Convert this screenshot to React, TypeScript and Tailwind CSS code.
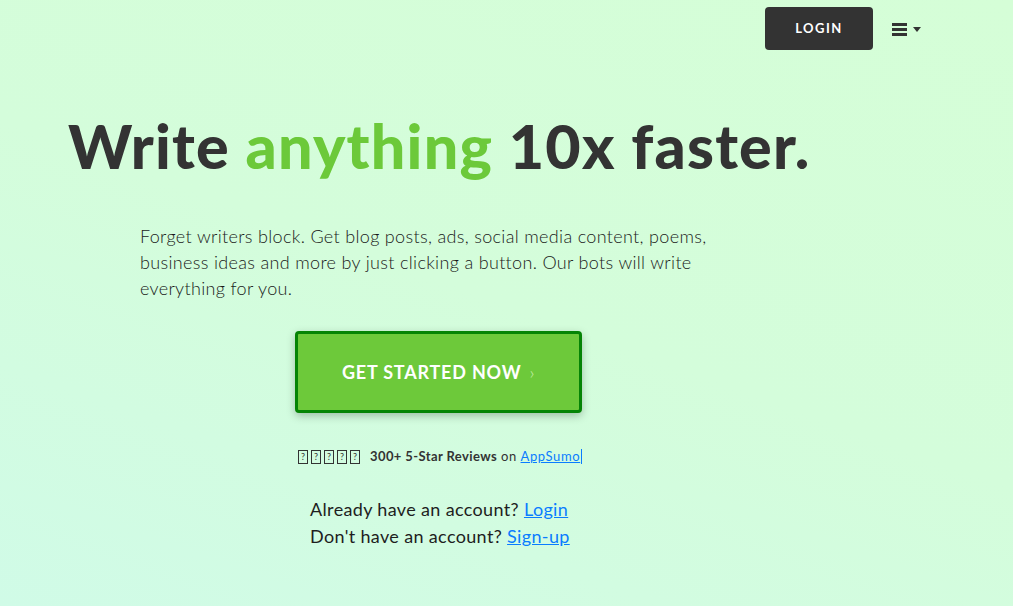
import React from "react";

const font = { fontFamily: "Lato, 'Noto Sans', sans-serif" };

function Tofu() {
  return (
    <span className="inline-flex h-[14px] w-[10px] items-center justify-center border border-[#333] text-[9px] leading-none text-[#333] mr-[3px]">
      ?
    </span>
  );
}

export default function App() {
  return (
    <div
      className="relative h-[606px] w-full overflow-hidden bg-[linear-gradient(200deg,#d5fed7_0%,#d4fddb_50%,#d0fbe7_100%)] text-[#333]"
      style={font}
    >
      <header className="flex h-[58px] items-start justify-end pr-[92px] pt-[7px]">
        <button className="h-[43px] w-[108px] rounded-[4px] bg-[#333333] text-[13px] font-bold tracking-[1.5px] text-white">
          LOGIN
        </button>
        <div className="ml-[19px] mt-[16px] flex items-center">
          <div className="flex flex-col gap-[2px]">
            <span className="block h-[3px] w-[15px] bg-[#333]" />
            <span className="block h-[3px] w-[15px] bg-[#333]" />
            <span className="block h-[3px] w-[15px] bg-[#333]" />
          </div>
          <span className="ml-[6px] block h-0 w-0 border-l-[4px] border-r-[4px] border-t-[5px] border-l-transparent border-r-transparent border-t-[#333]" />
        </div>
      </header>

      <h1 className="ml-[68px] mt-[48px] text-[61px] font-black leading-[80px] tracking-[1.2px] text-[#333]">
        Write <span className="text-[#6cc93a]">anything</span> 10x faster.
      </h1>

      <p className="ml-[140px] mt-[37px] w-[600px] text-[18px] font-light leading-[26px] tracking-[0.33px] text-[#1a1a1a]">
        Forget writers block. Get blog posts, ads, social media content, poems, business ideas and more by just clicking a button. Our bots will write everything for you.
      </p>

      <div className="ml-[295px] mt-[30px]">
        <button className="flex h-[82px] w-[287px] items-center justify-center rounded-[4px] border-[3px] border-[#058405] bg-[#6dc93a] text-[18px] font-bold tracking-[0.8px] text-white shadow-[0_3px_8px_rgba(0,0,0,0.25)]">
          GET STARTED NOW <span className="ml-[8px] font-light text-[#c8f0b0]">›</span>
        </button>
      </div>

      <div className="ml-[298px] mt-[34px] flex items-center text-[13px]">
        <Tofu />
        <Tofu />
        <Tofu />
        <Tofu />
        <Tofu />
        <span className="ml-[7px] font-bold tracking-[0.4px]">300+ 5-Star Reviews</span>
        <span className="ml-[4px] tracking-[0.4px]">on</span>
        <a className="ml-[4px] tracking-[0.6px] text-[#0a7cff] underline">AppSumo</a>
        <span className="ml-[1px] h-[15px] w-[1px] bg-[#0a7cff]" />
      </div>

      <div className="ml-[310px] mt-[29px] text-[18px] leading-[27px] tracking-[0.35px] text-[#1e1e1e]">
        <div>
          Already have an account? <a className="text-[#0a7cff] underline">Login</a>
        </div>
        <div>
          Don't have an account? <a className="text-[#0a7cff] underline">Sign-up</a>
        </div>
      </div>
    </div>
  );
}
